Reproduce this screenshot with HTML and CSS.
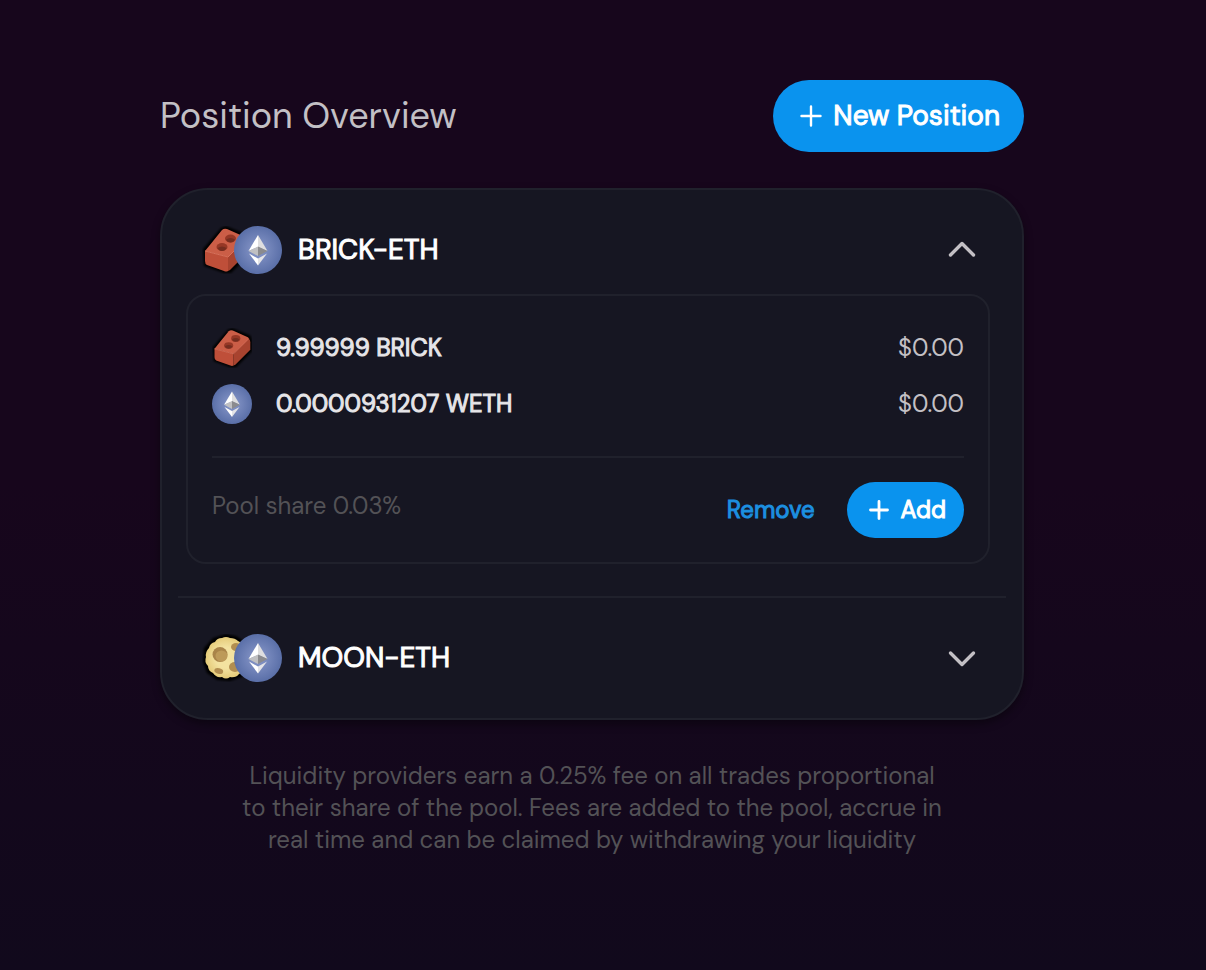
FILE: index.html
```
<!DOCTYPE html>
<html lang="en">
<head>
    <meta charset="UTF-8">
    <meta name="viewport" content="width=device-width, initial-scale=1.0">
    <title>Position Overview</title>
    <link rel="stylesheet" href="styles.css">
</head>
<body>
    <!-- Token icons -->
    <svg class="sprite" aria-hidden="true">
        <defs>
            <radialGradient id="ethBg">
                <stop offset="0" stop-color="#8b9acb"/>
                <stop offset="1" stop-color="#5a6fa8"/>
            </radialGradient>
            <radialGradient id="moonBg">
                <stop offset="0.5" stop-color="#f3e2a0"/>
                <stop offset="1" stop-color="#e5cb79"/>
            </radialGradient>
            <filter id="soft" x="-20%" y="-20%" width="140%" height="140%">
                <feGaussianBlur stdDeviation="1"/>
            </filter>
        </defs>
        <symbol id="eth" viewBox="0 0 48 48">
            <circle cx="24" cy="24" r="24" fill="url(#ethBg)"/>
            <path d="M24 9L14.500 25L24 21Z" fill="#ffffff"/>
            <path d="M24 9L33.500 25L24 21Z" fill="#dededf"/>
            <path d="M24 20.500L14.500 25L24 30Z" fill="#c0c0c2"/>
            <path d="M24 20.500L33.500 25L24 30Z" fill="#8b8b8e"/>
            <path d="M15 27.500L24 32.500V39.500Z" fill="#ffffff"/>
            <path d="M33 27.500L24 32.500V39.500Z" fill="#e4e4e7"/>
        </symbol>
        <symbol id="brick" viewBox="0 0 48 48">
            <path d="M1 23L19 2L24 0L46 9L48 14V28L29 47H22L2 40Z" fill="#000000" filter="url(#soft)"/>
            <path d="M3 25L20 4Q22 2 25 3L43 11Q45 12 44 14L26 31Z" fill="#cb5e47"/>
            <path d="M3 25L26 31V45Q24 46 22 45L5 39Q3 38 3 35Z" fill="#bf4f39"/>
            <path d="M26 31L44 13Q46 14 46 17V26L28 44L26 45Z" fill="#a8432f"/>
            <path d="M3 25L26 31L44 13" fill="none" stroke="#d9705a" stroke-width="1"/>
            <ellipse cx="28.500" cy="12.500" rx="5.500" ry="4" fill="#963826"/>
            <path d="M24 13.500Q28.500 10.500 33 13.500Q31.500 16.500 28.500 16.500Q25.500 16.500 24 13.500Z" fill="#752d1f"/>
            <ellipse cx="20" cy="21" rx="5.500" ry="4" fill="#963826"/>
            <path d="M15.500 22Q20 19 24.500 22Q23 25 20 25Q17 25 15.500 22Z" fill="#752d1f"/>
        </symbol>
        <symbol id="moon" viewBox="0 0 48 48">
            <path d="M24 0L34 2L43 8L48 20L47 32L40 43L28 47L15 46L5 39L1 28L2 14L11 4Z" fill="#000000" filter="url(#soft)"/>
            <path d="M20 4Q24 2 28 4Q33 4 36 7Q41 9 42 14Q46 18 44 23Q46 28 43 32Q42 38 37 40Q34 44 28 43Q24 46 20 43Q14 44 11 39Q6 37 6 32Q2 28 4 23Q3 18 7 14Q8 9 13 8Q15 4 20 4Z" fill="url(#moonBg)"/>
            <ellipse cx="18" cy="20.500" rx="7.500" ry="7.500" fill="#a98449"/>
            <ellipse cx="19.500" cy="22" rx="6" ry="5.500" fill="#bd9a59"/>
            <ellipse cx="34" cy="13" rx="5" ry="4" fill="#b28e50"/>
            <ellipse cx="33" cy="33" rx="6" ry="5" fill="#b28e50"/>
            <ellipse cx="17" cy="37" rx="4.500" ry="2.800" transform="rotate(15 17 36)" fill="#b28e50"/>
        </symbol>
        <symbol id="plus" viewBox="0 0 24 24">
            <path d="M12 2.500V21.500M2.500 12H21.500" fill="none" stroke="currentColor" stroke-width="2.400" stroke-linecap="round"/>
        </symbol>
        <symbol id="plusSmall" viewBox="0 0 24 24">
            <path d="M12 3.500V20.500M3.500 12H20.500" fill="none" stroke="currentColor" stroke-width="2.800" stroke-linecap="round"/>
        </symbol>
        <symbol id="chevron" viewBox="0 0 32 32">
            <path d="M4.500 11L16 22.500L27.500 11" fill="none" stroke="currentColor" stroke-width="3.400" stroke-linecap="round" stroke-linejoin="round"/>
        </symbol>
    </svg>

    <main class="container">
        <div class="page-header">
            <h1>Position Overview</h1>
            <button class="btn btn-large" type="button">
                <svg class="btn-icon"><use href="#plus"/></svg>
                New Position
            </button>
        </div>

        <div class="positions">
            <section class="position">
                <button class="position-toggle" type="button" aria-expanded="true" aria-controls="brickDetails">
                    <svg class="token"><use href="#brick"/></svg>
                    <svg class="token token-over"><use href="#eth"/></svg>
                    <span class="pair">BRICK-ETH</span>
                    <svg class="chevron chevron-up"><use href="#chevron"/></svg>
                </button>
                <div class="details" id="brickDetails">
                    <ul class="assets">
                        <li class="asset">
                            <svg class="asset-icon"><use href="#brick"/></svg>
                            <span class="amount">9.99999 BRICK</span>
                            <span class="value">$0.00</span>
                        </li>
                        <li class="asset">
                            <svg class="asset-icon"><use href="#eth"/></svg>
                            <span class="amount">0.0000931207 WETH</span>
                            <span class="value">$0.00</span>
                        </li>
                    </ul>
                    <div class="details-footer">
                        <span class="share">Pool share 0.03%</span>
                        <button class="btn-link" type="button">Remove</button>
                        <button class="btn" type="button">
                            <svg class="btn-icon"><use href="#plusSmall"/></svg>
                            Add
                        </button>
                    </div>
                </div>
            </section>
            <section class="position">
                <button class="position-toggle" type="button" aria-expanded="false">
                    <svg class="token"><use href="#moon"/></svg>
                    <svg class="token token-over"><use href="#eth"/></svg>
                    <span class="pair">MOON-ETH</span>
                    <svg class="chevron"><use href="#chevron"/></svg>
                </button>
            </section>
        </div>

        <p class="note">Liquidity providers earn a 0.25% fee on all trades proportional to their share of the pool. Fees are added to the pool, accrue in real time and can be claimed by withdrawing your liquidity</p>
    </main>
</body>
</html>
```
FILE: styles.css
```
:root {
    --bg-top: #17061c;
    --bg-bottom: #11091c;
    --card-bg: #161622;
    --border-color: #20212c;
    --primary-color: #0a93ee;
    --text-color: #ffffff;
    --text-secondary: #c3c0c5;
    --text-muted: #535256;
}

* {
    margin: 0;
    padding: 0;
    box-sizing: border-box;
}

body {
    background: linear-gradient(180deg, var(--bg-top) 0%, var(--bg-top) 50%, var(--bg-bottom) 100%);
    color: var(--text-color);
    font-family: 'DM Sans', Inter, sans-serif;
    font-size: 24px;
    line-height: 32px;
    min-height: 100vh;
}

button {
    font: inherit;
    color: inherit;
    background: none;
    border: none;
    cursor: pointer;
}

svg {
    display: block;
    flex-shrink: 0;
}

.sprite {
    position: absolute;
    width: 0;
    height: 0;
}

.container {
    padding: 80px 182px 80px 160px;
}

.page-header {
    display: flex;
    align-items: center;
    justify-content: space-between;
    margin-bottom: 36px;
}

.page-header h1 {
    font-size: 36px;
    font-weight: 400;
    color: var(--text-secondary);
}

.btn,
.btn-link,
.pair,
.amount {
    -webkit-text-stroke: 1px currentColor;
}

.btn {
    display: flex;
    align-items: center;
    gap: 10px;
    height: 56px;
    padding: 0 18px 0 20px;
    border-radius: 36px;
    background: var(--primary-color);
}

.btn-large {
    height: 72px;
    padding: 0 24px 0 26px;
    font-size: 28px;
}

.btn-icon {
    width: 24px;
    height: 24px;
}

.positions {
    background: var(--card-bg);
    border: 2px solid var(--border-color);
    border-radius: 48px;
    box-shadow: 0 4px 8px rgba(0, 0, 0, 0.4);
}

.position + .position:before {
    content: '';
    display: block;
    height: 2px;
    margin: 0 16px;
    background: var(--border-color);
}

.position-toggle {
    display: flex;
    align-items: center;
    width: 100%;
    padding: 36px 44px 36px 40px;
    font-size: 28px;
}

.position-toggle[aria-expanded="true"] {
    padding-bottom: 20px;
}

.token {
    width: 48px;
    height: 48px;
}

.token-over {
    margin-left: -16px;
}

.pair {
    margin-left: 16px;
}

.chevron {
    width: 32px;
    height: 32px;
    margin-left: auto;
    color: var(--text-secondary);
}

.chevron-up {
    transform: rotate(180deg);
}

.details {
    margin: 0 32px 32px 24px;
    padding: 24px;
    border: 2px solid var(--border-color);
    border-radius: 20px;
}

.assets {
    display: flex;
    flex-direction: column;
    gap: 16px;
    padding: 8px 0 32px;
    border-bottom: 2px solid var(--border-color);
    list-style: none;
}

.asset {
    display: flex;
    align-items: center;
}

.asset-icon {
    width: 40px;
    height: 40px;
    margin-right: 24px;
}

.amount {
    color: #e6e5e8;
}

.value {
    margin-left: auto;
    color: var(--text-secondary);
}

.details-footer {
    display: flex;
    align-items: center;
    gap: 32px;
    padding-top: 24px;
}

.share {
    margin-right: auto;
    padding-bottom: 8px;
    color: var(--text-muted);
}

.btn-link {
    color: #1c8fe0;
}

.note {
    max-width: 704px;
    margin: 40px auto 0;
    color: var(--text-muted);
    text-align: center;
}
```
